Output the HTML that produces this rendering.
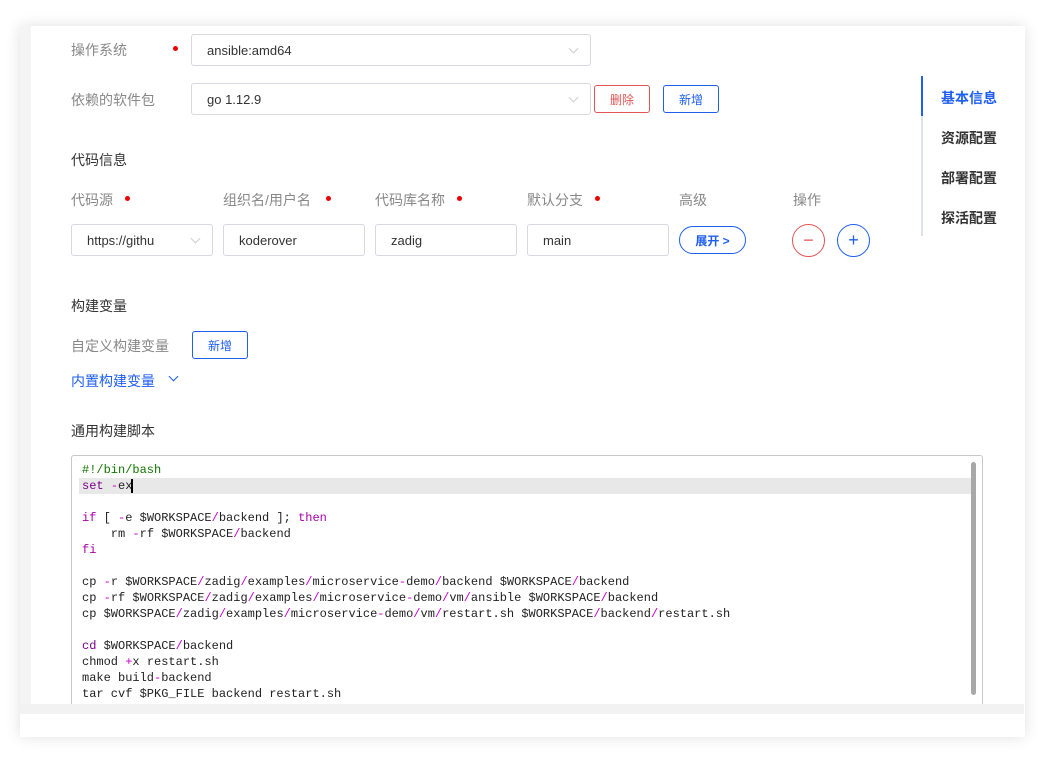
<!DOCTYPE html>
<html><head><meta charset="utf-8"><style>
*{box-sizing:border-box;margin:0;padding:0}
body{width:1045px;height:757px;background:#fff;position:relative;overflow:hidden;font-family:"Liberation Sans","Noto Sans CJK SC",sans-serif;font-size:14px;color:#333}
.card{position:absolute;left:20px;top:26px;width:1005px;height:711px;background:#fff;box-shadow:0 0 14px rgba(0,0,0,.12)}
.strip{position:absolute;left:20px;top:26px;width:11px;height:678px;background:#f4f4f4}
.band{position:absolute;left:20px;top:704px;width:1004px;height:10px;background:#f2f2f2}
.a{position:absolute;white-space:nowrap}
.lbl{color:#888;font-size:14px}
.dot{position:absolute;width:5px;height:5px;border-radius:50%;background:#e00}
.inp{position:absolute;border:1px solid #d7d9e0;border-radius:3px;background:#fff;font-size:13px;color:#333;padding-left:15px;display:flex;align-items:center}
.chev{position:absolute;right:13px;top:50%;width:7px;height:7px;border-right:1px solid #ccc;border-bottom:1px solid #ccc;transform:translateY(-70%) rotate(45deg)}
.btn{position:absolute;border:1px solid;border-radius:3px;font-size:12px;display:flex;align-items:center;justify-content:center}
.h{color:#333;font-size:14px}
.nav{position:absolute;left:941px;font-size:14px;font-weight:bold;color:#333}
.code{position:absolute;left:71px;top:455px;width:912px;height:252px;border:1px solid #c8c8c8;border-radius:3px;overflow:hidden;font-family:"Liberation Mono",monospace;font-size:12px;line-height:16px;color:#222}
.code pre{font:inherit;position:absolute;left:10px;top:6px}
.k{color:#708}.s{color:#a0a}.c{color:#170}.p{color:#c0c}
</style></head><body>
<div class="card"></div>
<div class="strip"></div>

<div class="a lbl" style="left:71px;top:40px">操作系统</div>
<div class="dot" style="left:173px;top:46px"></div>
<div class="inp" style="left:191px;top:34px;width:400px;height:32px">ansible:amd64<span class="chev"></span></div>

<div class="a lbl" style="left:71px;top:90px">依赖的软件包</div>
<div class="inp" style="left:191px;top:83px;width:400px;height:32px">go 1.12.9<span class="chev"></span></div>
<div class="btn" style="left:594px;top:85px;width:56px;height:28px;border-color:#e05555;color:#e05555">删除</div>
<div class="btn" style="left:663px;top:85px;width:56px;height:28px;border-color:#1e5ef0;color:#1e5ef0">新增</div>

<div class="a h" style="left:71px;top:150px">代码信息</div>

<div class="a lbl" style="left:71px;top:190px">代码源</div><div class="dot" style="left:125px;top:196px"></div>
<div class="a lbl" style="left:223px;top:190px">组织名/用户名</div><div class="dot" style="left:326px;top:196px"></div>
<div class="a lbl" style="left:375px;top:190px">代码库名称</div><div class="dot" style="left:457px;top:196px"></div>
<div class="a lbl" style="left:527px;top:190px">默认分支</div><div class="dot" style="left:595px;top:196px"></div>
<div class="a lbl" style="left:679px;top:190px">高级</div>
<div class="a lbl" style="left:793px;top:190px">操作</div>

<div class="inp" style="left:71px;top:224px;width:142px;height:32px">https://githu<span class="chev"></span></div>
<div class="inp" style="left:223px;top:224px;width:142px;height:32px">koderover</div>
<div class="inp" style="left:375px;top:224px;width:142px;height:32px">zadig</div>
<div class="inp" style="left:527px;top:224px;width:142px;height:32px">main</div>
<div class="btn" style="left:679px;top:226px;width:67px;height:28px;border-radius:14px;border-color:#1e5ef0;color:#1e5ef0;font-weight:bold">展开 &gt;</div>
<div class="btn" style="left:792px;top:224px;width:33px;height:33px;border-radius:50%;border-color:#e05555;color:#e05555;font-size:18px;font-weight:100">−</div>
<div class="btn" style="left:837px;top:224px;width:33px;height:33px;border-radius:50%;border-color:#1e5ef0;color:#1e5ef0;font-size:18px;font-weight:100">+</div>

<div style="position:absolute;left:921px;top:76px;width:2px;height:160px;background:#dfe2ea"></div>
<div style="position:absolute;left:921px;top:76px;width:2px;height:40px;background:#1e5ef0"></div>
<div class="nav" style="top:88px;color:#1e5ef0">基本信息</div>
<div class="nav" style="top:128px">资源配置</div>
<div class="nav" style="top:168px">部署配置</div>
<div class="nav" style="top:208px">探活配置</div>

<div class="a h" style="left:71px;top:296px">构建变量</div>
<div class="a lbl" style="left:71px;top:336px">自定义构建变量</div>
<div class="btn" style="left:192px;top:331px;width:56px;height:28px;border-color:#1e5ef0;color:#1e5ef0">新增</div>
<div class="a" style="left:71px;top:371px;color:#1e5ef0">内置构建变量</div>
<div style="position:absolute;left:170px;top:373px;width:7px;height:7px;border-right:1px solid #1e5ef0;border-bottom:1px solid #1e5ef0;transform:rotate(45deg)"></div>

<div class="a h" style="left:71px;top:421px">通用构建脚本</div>

<div class="code">
<div style="position:absolute;left:7px;top:22px;width:892px;height:16px;background:#e8e8e8"></div>
<pre><span class="c">#!/bin/bash</span>
<span class="k">set</span> <span class="p">-</span>ex<span style="border-left:2px solid #000;margin-left:-1px"></span>

<span class="s">if</span> [ <span class="p">-</span>e $WORKSPACE<span class="p">/</span>backend ]; <span class="s">then</span>
    rm <span class="p">-</span>rf $WORKSPACE<span class="p">/</span>backend
<span class="s">fi</span>

cp <span class="p">-</span>r $WORKSPACE<span class="p">/</span>zadig<span class="p">/</span>examples<span class="p">/</span>microservice<span class="p">-</span>demo<span class="p">/</span>backend $WORKSPACE<span class="p">/</span>backend
cp <span class="p">-</span>rf $WORKSPACE<span class="p">/</span>zadig<span class="p">/</span>examples<span class="p">/</span>microservice<span class="p">-</span>demo<span class="p">/</span>vm<span class="p">/</span>ansible $WORKSPACE<span class="p">/</span>backend
cp $WORKSPACE<span class="p">/</span>zadig<span class="p">/</span>examples<span class="p">/</span>microservice<span class="p">-</span>demo<span class="p">/</span>vm<span class="p">/</span>restart.sh $WORKSPACE<span class="p">/</span>backend<span class="p">/</span>restart.sh

<span class="k">cd</span> $WORKSPACE<span class="p">/</span>backend
chmod <span class="p">+</span>x restart.sh
make build<span class="p">-</span>backend
tar cvf $PKG_FILE backend restart.sh</pre>
<div style="position:absolute;left:899px;top:6px;width:5px;height:233px;background:#a8a8a8;border-radius:3px"></div>
</div>
<div class="band"></div>
</body></html>
